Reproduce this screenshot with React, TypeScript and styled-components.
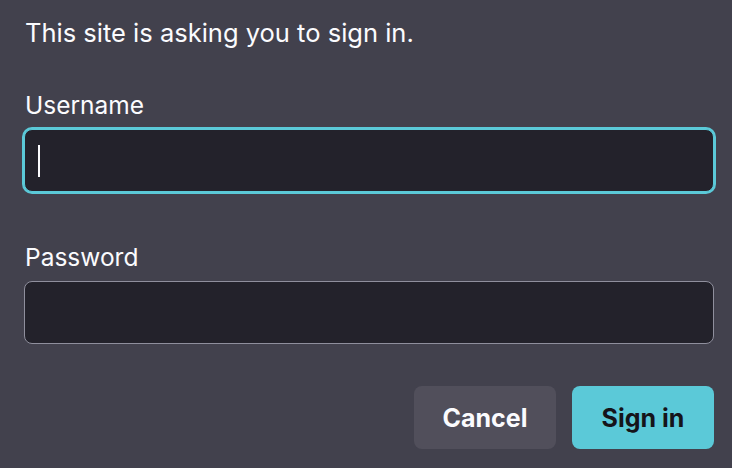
import React from "react";
import styled, { createGlobalStyle } from "styled-components";

const GlobalStyle = createGlobalStyle`
  html, body {
    margin: 0;
    padding: 0;
    background: #42414d;
  }
  body {
    font-family: Inter, "Noto Sans", "Liberation Sans", sans-serif;
    color: #fbfbfe;
  }
`;

export default function App() {
  return (
    <>
      <GlobalStyle />
      <Dialog>
        <Message>This site is asking you to sign in.</Message>
        <Field>
          <Label>Username</Label>
          <InputBox focused>
            <Caret />
          </InputBox>
        </Field>
        <Field>
          <Label>Password</Label>
          <InputBox />
        </Field>
        <Actions>
          <Button>Cancel</Button>
          <Button primary>Sign in</Button>
        </Actions>
      </Dialog>
    </>
  );
}

const Dialog = styled.div`
  display: flex;
  flex-direction: column;
  width: 732px;
  height: 468px;
  box-sizing: border-box;
  padding: 16px 18px 0 24px;
`;

const Message = styled.div`
  font-size: 25.5px;
  line-height: 34px;
  height: 34px;
  padding-left: 1px;
`;

const Field = styled.div`
  display: flex;
  flex-direction: column;
  margin-top: 40px;

  & + & {
    margin-top: 50px;
  }
`;

const Label = styled.div`
  font-size: 24.5px;
  line-height: 30px;
  margin-bottom: 9px;
  padding-left: 1px;
`;

const InputBox = styled.div<{ focused?: boolean }>`
  position: relative;
  height: 63px;
  box-sizing: border-box;
  border-radius: 8px;
  background: #23222b;
  border: 1px solid ${(p) => (p.focused ? "#5bc9d8" : "#8f8f9d")};
  box-shadow: ${(p) => (p.focused ? "0 0 0 2px #5bc9d8" : "none")};
`;

const Caret = styled.span`
  position: absolute;
  left: 13px;
  top: 15px;
  width: 2px;
  height: 32px;
  background: #fbfbfe;
`;

const Actions = styled.div`
  display: flex;
  justify-content: flex-end;
  gap: 16px;
  margin-top: 42px;
`;

const Button = styled.button<{ primary?: boolean }>`
  width: 142px;
  height: 63px;
  border: none;
  border-radius: 8px;
  font-family: Inter, "Noto Sans", "Liberation Sans", sans-serif;
  font-size: 25px;
  font-weight: 700;
  background: ${(p) => (p.primary ? "#5bc9d8" : "#514f5b")};
  color: ${(p) => (p.primary ? "#15141a" : "#fbfbfe")};
  cursor: pointer;
`;
